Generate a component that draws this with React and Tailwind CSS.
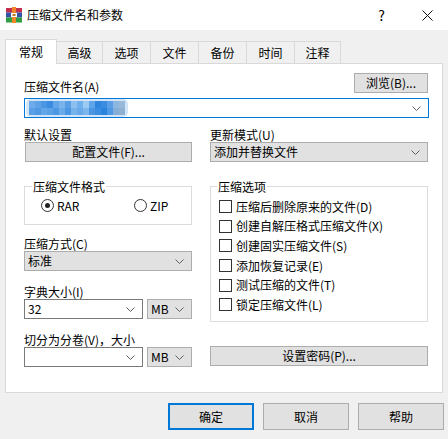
import React from "react";

const mosaicTop = [
  "bg-[#6eabea]", "bg-[#5ea2e8]", "bg-[#4a96e3]", "bg-[#3a8ce0]", "bg-[#62a5e8]", "bg-[#78b3ec]",
  "bg-[#5a9fe6]", "bg-[#8cc0f0]", "bg-[#70b0ec]", "bg-[#9ccaf2]", "bg-[#5ea4e8]", "bg-[#2f86de]",
  "bg-[#3a8ce0]", "bg-[#5a9ee6]", "bg-[#8ab6e0]", "bg-[#9ab8d8]",
];
const mosaicBottom = [
  "bg-[#5a9fe6]", "bg-[#4f99e4]", "bg-[#64a6e8]", "bg-[#5ba1e6]", "bg-[#4d97e3]", "bg-[#6aaaea]",
  "bg-[#4c97e3]", "bg-[#76b3ec]", "bg-[#68a9ea]", "bg-[#7cb6ec]", "bg-[#4a96e3]", "bg-[#3a8de0]",
  "bg-[#2a84dd]", "bg-[#4f99e4]", "bg-[#82aed8]", "bg-[#8fb0d0]",
];

const tabs = [
  { label: "高级", w: "w-[46px]" },
  { label: "选项", w: "w-[48px]" },
  { label: "文件", w: "w-[48px]" },
  { label: "备份", w: "w-[48px]" },
  { label: "时间", w: "w-[48px]" },
  { label: "注释", w: "w-[46px]" },
];

const options = [
  "压缩后删除原来的文件(D)",
  "创建自解压格式压缩文件(X)",
  "创建固实压缩文件(S)",
  "添加恢复记录(E)",
  "测试压缩的文件(T)",
  "锁定压缩文件(L)",
];

const Chevron = () => (
  <svg width="9" height="5" viewBox="0 0 9 5" className="shrink-0">
    <path d="M0.5 0.5 L4.5 4.5 L8.5 0.5" fill="none" stroke="#606060" strokeWidth="1" />
  </svg>
);

const RarIcon = () => (
  <svg width="16" height="16" viewBox="0 0 16 16">
    <rect x="0" y="1" width="16" height="4.5" fill="#c2304e" />
    <rect x="0" y="5.5" width="16" height="5" fill="#3452a6" />
    <rect x="0" y="10.5" width="16" height="5" fill="#2f9e43" />
    <rect x="6" y="0" width="4" height="16" fill="#f0862a" />
    <rect x="5" y="6" width="6" height="4" fill="#ffffff" />
    <rect x="6.5" y="7" width="3" height="2" fill="#b8761f" />
  </svg>
);

const Button = ({ children, className = "" }) => (
  <div className={`h-[20px] bg-[#e1e1e1] border border-[#adadad] flex items-center justify-center leading-[16px] ${className}`}>
    {children}
  </div>
);

const Combo = ({ children, className = "", gray = false }) => (
  <div
    className={`h-[20px] border flex items-center justify-between pl-[3px] pr-[7px] leading-[16px] ${
      gray ? "bg-[#e1e1e1] border-[#adadad]" : "bg-white border-[#7a7a7a]"
    } ${className}`}
  >
    <span>{children}</span>
    <Chevron />
  </div>
);

const Label = ({ children, className = "" }) => (
  <div className={`h-[15px] leading-[15px] ${className}`}>{children}</div>
);

export default function App() {
  return (
    <div className="w-[448px] h-[439px] bg-[#f0f0f0] text-[12px] text-black font-['Noto_Sans_CJK_SC',sans-serif] overflow-hidden flex flex-col">
      {/* Title bar */}
      <div className="h-[30px] bg-white flex items-center pl-[6px] shrink-0">
        <RarIcon />
        <span className="ml-[5px] leading-[16px]">压缩文件名和参数</span>
        <span className="ml-auto text-[14px] leading-[16px]">?</span>
        <svg width="11" height="11" viewBox="0 0 11 11" className="ml-[37px] mr-[15px]">
          <path d="M0.5 0.5 L10.5 10.5 M10.5 0.5 L0.5 10.5" stroke="#111" strokeWidth="1" />
        </svg>
      </div>

      {/* Tabs */}
      <div className="mt-[9px] pl-[5px] h-[24px] flex items-end shrink-0">
        <div className="relative z-10 -mb-px h-[25px] w-[52px] bg-white border border-b-0 border-[#d9d9d9] flex items-center justify-center leading-[16px]">
          常规
        </div>
        {tabs.map((t) => (
          <div
            key={t.label}
            className={`h-[22px] ${t.w} border-t border-r border-[#d9d9d9] flex items-center justify-center leading-[16px]`}
          >
            {t.label}
          </div>
        ))}
      </div>

      {/* Panel */}
      <div className="mx-[5px] h-[330px] shrink-0 bg-white border border-[#d9d9d9] pl-[18px] pr-[13px] pt-[9px]">
        <div className="h-[22px] flex justify-between">
          <span className="mt-[6px] leading-[16px]">压缩文件名(A)</span>
          <Button className="w-[74px] mr-[1px]">浏览(B)...</Button>
        </div>
        <div className="mt-[3px] h-[20px] border border-[#0078d7] flex items-center justify-between pl-[1px] pr-[7px]">
          <div className="rounded-[5px] bg-[#d2e4f7] px-[3px] py-[2px]">
            <div className="flex blur-[0.4px]">
              {mosaicTop.map((c, i) => (
                <div key={i} className="flex flex-col">
                  <div className={`w-[6px] h-[7px] ${c}`} />
                  <div className={`w-[6px] h-[7px] ${mosaicBottom[i]}`} />
                </div>
              ))}
            </div>
          </div>
          <Chevron />
        </div>

        <div className="mt-[9px] flex gap-[18px]">
          {/* Left column */}
          <div className="w-[168px] flex flex-col">
            <Label>默认设置</Label>
            <Button className="ml-[1px] w-[167px]">配置文件(F)...</Button>

            <div className="relative mt-[24px] h-[39px] border border-[#dcdcdc] flex items-center pl-[16px]">
              <span className="absolute -top-[8px] left-[7px] bg-white px-[1px] leading-[16px]">压缩文件格式</span>
              <div className="w-[93px] flex items-center gap-[3px]">
                <div className="w-[13px] h-[13px] rounded-full border border-[#333] flex items-center justify-center">
                  <div className="w-[5px] h-[5px] rounded-full bg-[#222]" />
                </div>
                <span className="leading-[16px]">RAR</span>
              </div>
              <div className="flex items-center gap-[3px]">
                <div className="w-[13px] h-[13px] rounded-full border border-[#333]" />
                <span className="leading-[16px]">ZIP</span>
              </div>
            </div>

            <Label className="mt-[11px]">压缩方式(C)</Label>
            <Combo gray>标准</Combo>

            <Label className="mt-[13px]">字典大小(I)</Label>
            <div className="flex gap-[4px]">
              <Combo className="w-[119px]">32</Combo>
              <Combo gray className="w-[45px]">MB</Combo>
            </div>

            <Label className="mt-[13px]">切分为分卷(V)，大小</Label>
            <div className="flex gap-[4px]">
              <Combo className="w-[119px]"></Combo>
              <Combo gray className="w-[45px]">MB</Combo>
            </div>
          </div>

          {/* Right column */}
          <div className="w-[218px] flex flex-col">
            <Label>更新模式(U)</Label>
            <Combo gray>添加并替换文件</Combo>

            <div className="relative mt-[24px] h-[136px] border border-[#dcdcdc] pl-[8px] pt-[10px]">
              <span className="absolute -top-[8px] left-[6px] bg-white px-[1px] leading-[16px]">压缩选项</span>
              {options.map((o) => (
                <div key={o} className="h-[19.6px] flex items-center gap-[4px]">
                  <div className="w-[13px] h-[13px] border border-[#333] bg-white shrink-0" />
                  <span className="leading-[16px]">{o}</span>
                </div>
              ))}
            </div>

            <Button className="mt-[24px]">设置密码(P)...</Button>
          </div>
        </div>
      </div>

      {/* Bottom buttons */}
      <div className="mt-[10px] flex justify-end gap-[9px] pr-[4px]">
        <div className="w-[86px] h-[27px] bg-[#e1e1e1] border-2 border-[#0078d7] flex items-center justify-center leading-[16px]">
          确定
        </div>
        <div className="w-[86px] h-[27px] bg-[#e1e1e1] border border-[#adadad] flex items-center justify-center leading-[16px]">
          取消
        </div>
        <div className="w-[86px] h-[27px] bg-[#e1e1e1] border border-[#adadad] flex items-center justify-center leading-[16px]">
          帮助
        </div>
      </div>
    </div>
  );
}
